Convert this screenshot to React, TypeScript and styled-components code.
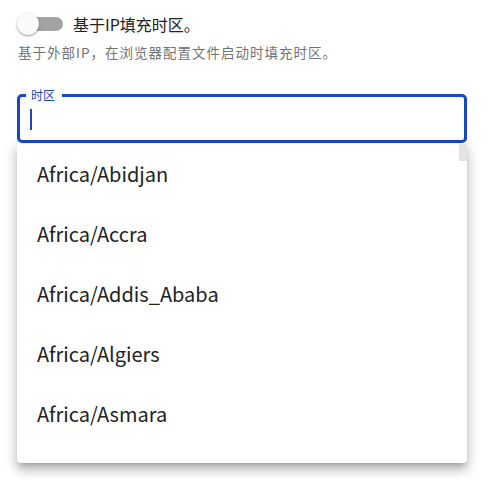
import React from 'react';
import styled, { createGlobalStyle } from 'styled-components';

const GlobalStyle = createGlobalStyle`
  body {
    margin: 0;
    background: #ffffff;
    font-family: "Noto Sans CJK SC", "Noto Sans", sans-serif;
    color: #212121;
  }
`;

const Page = styled.div`
  width: 491px;
  height: 484px;
  padding: 12px 24px 0 17px;
  box-sizing: border-box;
  display: flex;
  flex-direction: column;
`;

const ToggleRow = styled.label`
  display: flex;
  align-items: center;
  gap: 10px;
  height: 24px;
`;

const Switch = styled.span`
  position: relative;
  width: 46px;
  height: 24px;
  flex: none;
`;

const Track = styled.span`
  position: absolute;
  left: 8px;
  right: 0;
  top: 5px;
  height: 14px;
  border-radius: 7px;
  background: #a3a3a3;
`;

const Thumb = styled.span`
  position: absolute;
  left: 0;
  top: 1px;
  width: 22px;
  height: 22px;
  border-radius: 50%;
  background: #fafafa;
  box-shadow: 0 1px 3px rgba(0, 0, 0, 0.3), 0 1px 1px rgba(0, 0, 0, 0.14);
`;

const ToggleLabel = styled.span`
  font-size: 16px;
  line-height: 24px;
  color: #222;
`;

const Hint = styled.p`
  margin: 4px 0 0 1px;
  font-size: 13.5px;
  line-height: 24px;
  letter-spacing: 1px;
  color: #727272;
`;

const Field = styled.fieldset`
  margin: 25px 0 0 0;
  padding: 0 10px;
  height: 54px;
  box-sizing: border-box;
  border: 3px solid #1848c6;
  border-radius: 5px;
`;

const Legend = styled.legend`
  margin-left: -4px;
  padding: 0 7px 0 5px;
  font-size: 12px;
  line-height: 12px;
  color: #1848c6;
`;

const Caret = styled.span`
  display: block;
  width: 2px;
  height: 21px;
  margin-top: 8px;
  background: #1848c6;
`;

const Menu = styled.ul`
  list-style: none;
  margin: 1px 0 0 0;
  padding: 0;
  height: 319px;
  overflow: hidden;
  position: relative;
  background: #fff;
  border-radius: 0 0 4px 4px;
  box-shadow: 0 5px 5px -3px rgba(0, 0, 0, 0.2), 0 8px 10px 1px rgba(0, 0, 0, 0.14),
    0 3px 14px 2px rgba(0, 0, 0, 0.12);
`;

const ScrollThumb = styled.span`
  position: absolute;
  right: 0;
  top: 0;
  width: 8px;
  height: 17px;
  background: #e3e3e3;
`;

const Option = styled.li`
  height: 60px;
  box-sizing: border-box;
  padding: 0 0 2px 20px;
  display: flex;
  align-items: center;
  font-size: 20px;
  color: #222;
`;

const zones = [
  'Africa/Abidjan',
  'Africa/Accra',
  'Africa/Addis_Ababa',
  'Africa/Algiers',
  'Africa/Asmara',
];

export default function App() {
  return (
    <>
      <GlobalStyle />
      <Page>
        <ToggleRow>
          <Switch>
            <Track />
            <Thumb />
          </Switch>
          <ToggleLabel>基于IP填充时区。</ToggleLabel>
        </ToggleRow>
        <Hint>基于外部IP，在浏览器配置文件启动时填充时区。</Hint>
        <Field>
          <Legend>时区</Legend>
          <Caret />
        </Field>
        <Menu>
          <ScrollThumb />
          {zones.map((zone) => (
            <Option key={zone}>{zone}</Option>
          ))}
        </Menu>
      </Page>
    </>
  );
}
